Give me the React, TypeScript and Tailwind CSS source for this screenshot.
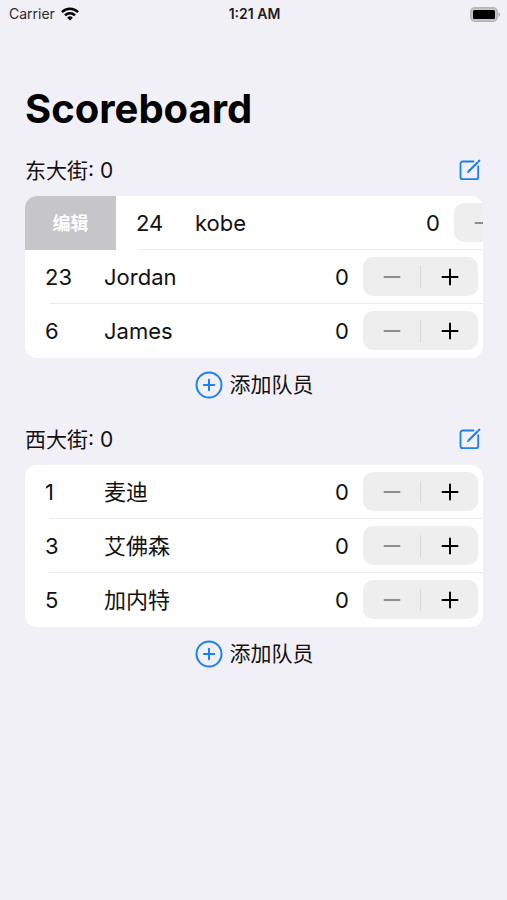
import { useState } from 'react';
import clsx from 'clsx';

type Player = { number: number; name: string; score: number };
type Team = { name: string; players: Player[]; swiped?: number };

const initialTeams: Team[] = [
  {
    name: '东大街',
    swiped: 24,
    players: [
      { number: 24, name: 'kobe', score: 0 },
      { number: 23, name: 'Jordan', score: 0 },
      { number: 6, name: 'James', score: 0 },
    ],
  },
  {
    name: '西大街',
    players: [
      { number: 1, name: '麦迪', score: 0 },
      { number: 3, name: '艾佛森', score: 0 },
      { number: 5, name: '加内特', score: 0 },
    ],
  },
];

function StatusBar() {
  return (
    <div className="grid h-7 grid-cols-3 items-center pr-[7px] pl-[9px] text-sm text-[#2a2a2c]">
      <div className="flex items-center gap-1.5">
        <span>Carrier</span>
        <svg viewBox="0 0 18 14" className="h-3.5 w-[18px]" fill="none" stroke="#000" strokeWidth="2.5" aria-hidden="true">
          <path d="M1 5.1a11.5 11.5 0 0 1 16 0" />
          <path d="M4 8.3a7.2 7.2 0 0 1 10 0" />
          <path d="M9 13.6 6.2 10.7a4 4 0 0 1 5.6 0z" fill="#000" stroke="none" />
        </svg>
      </div>
      <span className="text-center font-semibold text-[#1c1c1e]">1:21 AM</span>
      <svg viewBox="0 0 30 15" className="h-[15px] w-[30px] justify-self-end" aria-hidden="true">
        <rect x="0.75" y="0.75" width="26.5" height="13.5" rx="4" fill="#c4c4c7" stroke="#b6b6b9" strokeWidth="1.5" />
        <rect x="3" y="3" width="22" height="9" rx="1.5" fill="#000" />
        <path d="M28.5 5.2c1 .5 1.5 1.3 1.5 2.3s-.5 1.8-1.5 2.3z" fill="#a5a5a8" />
      </svg>
    </div>
  );
}

function Stepper({ name, value, onChange }: { name: string; value: number; onChange: (value: number) => void }) {
  return (
    <div className="flex h-[39px] w-[115px] shrink-0 items-center rounded-[10px] bg-[#eeeeee]">
      <button
        type="button"
        aria-label={`${name} -1`}
        disabled={value === 0}
        onClick={() => onChange(value - 1)}
        className="flex h-full flex-1 items-center justify-center text-black disabled:text-[#8c8c8c]"
      >
        <svg viewBox="0 0 18 18" className="h-[18px] w-[18px]" stroke="currentColor" strokeWidth="2" strokeLinecap="round">
          <path d="M1.5 9h15" />
        </svg>
      </button>
      <span className="h-[22px] w-px bg-[#d9d9da]" />
      <button
        type="button"
        aria-label={`${name} +1`}
        onClick={() => onChange(value + 1)}
        className="flex h-full flex-1 items-center justify-center text-black"
      >
        <svg viewBox="0 0 18 18" className="h-[18px] w-[18px]" stroke="currentColor" strokeWidth="2" strokeLinecap="round">
          <path d="M1.5 9h15M9 1.5v15" />
        </svg>
      </button>
    </div>
  );
}

type PlayerRowProps = {
  player: Player;
  swiped: boolean;
  last: boolean;
  onScore: (score: number) => void;
};

function PlayerRow({ player, swiped, last, onScore }: PlayerRowProps) {
  return (
    <li className="flex h-[54px] overflow-hidden">
      {swiped && (
        <button type="button" className="w-[91px] shrink-0 bg-[#c5c5ca] pt-0.5 text-lg font-bold text-white">
          编辑
        </button>
      )}
      <div className="flex w-full shrink-0 flex-col">
        <div className="flex flex-1 items-center pr-[5px] pl-5 text-[22px]">
          <span className="w-[59px] pt-0.5">{player.number}</span>
          <span className="flex-1 pt-0.5">{player.name}</span>
          <span className="pt-0.5 pr-3.5">{player.score}</span>
          <Stepper name={player.name} value={player.score} onChange={onScore} />
        </div>
        <div className={clsx('ml-6 h-px', !last && 'bg-[#e9e9eb]')} />
      </div>
    </li>
  );
}

function EditIcon() {
  return (
    <svg viewBox="0 0 22 22" className="h-[22px] w-[22px]" fill="none" stroke="#1a80f0" strokeWidth="1.8" aria-hidden="true">
      <path
        d="M14.5 2.5H3.8A2.3 2.3 0 0 0 1.500 4.800v13.100a2.300 2.300 0 0 0 2.300 2.300h13.100a2.300 2.300 0 0 0 2.300-2.300V7.200"
        strokeLinecap="round"
      />
      <path d="M9.200 12.800 18.800 3.200" strokeWidth="2.200" />
      <path d="m7.800 14.300 2.300-.9-1.400-1.400z" fill="#1a80f0" stroke="none" />
      <path d="m19.500 2.500.8-.8" strokeWidth="2.200" strokeLinecap="round" />
    </svg>
  );
}

export default function App() {
  const [teams, setTeams] = useState<Team[]>(initialTeams);

  const setScore = (teamName: string, number: number, score: number) => {
    setTeams(
      teams.map((team) =>
        team.name !== teamName
          ? team
          : { ...team, players: team.players.map((p) => (p.number === number ? { ...p, score } : p)) },
      ),
    );
  };

  return (
    <div className="min-h-screen bg-[#f1f0f6] font-['Inter','Noto_Sans_CJK_SC',sans-serif] text-[#111111]">
      <StatusBar />
      <main className="pt-[57px] pr-6 pl-[25px]">
        <h1 className="pb-2.5 text-[40px] leading-[48px] font-bold text-black">Scoreboard</h1>
        {teams.map((team) => (
          <section key={team.name}>
            <div className="flex h-[53px] items-center justify-between pr-0.5">
              <h2 className="pt-0.5 text-[21px]">
                {team.name}: {team.players.reduce((sum, p) => sum + p.score, 0)}
              </h2>
              <button type="button" aria-label={`编辑${team.name}`}>
                <EditIcon />
              </button>
            </div>
            <ul className="overflow-hidden rounded-xl bg-white">
              {team.players.map((player, i) => (
                <PlayerRow
                  key={player.number}
                  player={player}
                  swiped={team.swiped === player.number}
                  last={i === team.players.length - 1}
                  onScore={(score) => setScore(team.name, player.number, score)}
                />
              ))}
            </ul>
            <div className="flex h-[54px] items-center justify-center">
              <button type="button" className="flex items-center gap-[7px] text-[21px]">
                <svg viewBox="0 0 28 28" className="h-7 w-7" fill="none" stroke="#1a80f8" strokeWidth="2" strokeLinecap="round" aria-hidden="true">
                  <circle cx="14" cy="14" r="12.5" />
                  <path d="M8.8 14h10.4M14 8.8v10.4" />
                </svg>
                添加队员
              </button>
            </div>
          </section>
        ))}
      </main>
    </div>
  );
}
